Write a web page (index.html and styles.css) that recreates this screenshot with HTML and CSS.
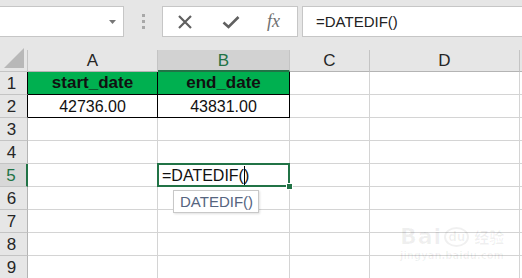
FILE: index.html
```html
<!DOCTYPE html>
<html lang="en">
<head>
    <meta charset="UTF-8">
    <title>DATEDIF</title>
    <link rel="stylesheet" href="styles.css">
</head>
<body>

    <!-- Formula bar -->
    <div class="toolbar">
        <div class="name-box">
            <svg class="drop" width="7" height="4" viewBox="0 0 7 4"><path d="M0 0h7L3.5 4z" fill="#777"/></svg>
        </div>
        <div class="grip"><span></span><span></span><span></span></div>
        <div class="fx-buttons">
            <svg width="16" height="16" viewBox="0 0 16 16"><path d="M2 2L14 14M14 2L2 14" stroke="#606060" stroke-width="2.2" fill="none"/></svg>
            <svg width="18" height="16" viewBox="0 0 18 16"><path d="M1.5 8.5L6.5 13L16.5 3" stroke="#606060" stroke-width="2.6" fill="none"/></svg>
            <span class="fx">fx</span>
        </div>
        <div class="formula">=DATEDIF()</div>
    </div>

    <!-- Sheet -->
    <div class="sheet">
        <div class="corner"><svg width="20" height="20" viewBox="0 0 20 20"><path d="M20 0V20H0z" fill="#b8b8b8"/></svg></div>
        <div class="col-head">A</div>
        <div class="col-head active">B</div>
        <div class="col-head">C</div>
        <div class="col-head">D</div>
        <div class="col-head end"></div>

        <div class="row-head dark">1</div>
        <div class="cell head-cell">start_date</div>
        <div class="cell head-cell">end_date</div>
        <div class="cell"></div>
        <div class="cell"></div>
        <div class="cell end"></div>

        <div class="row-head dark">2</div>
        <div class="cell boxed">42736.00</div>
        <div class="cell boxed">43831.00</div>
        <div class="cell"></div>
        <div class="cell"></div>
        <div class="cell end"></div>

        <div class="row-head">3</div>
        <div class="cell"></div><div class="cell"></div><div class="cell"></div><div class="cell"></div><div class="cell end"></div>

        <div class="row-head">4</div>
        <div class="cell"></div><div class="cell"></div><div class="cell"></div><div class="cell"></div><div class="cell end"></div>

        <div class="row-head active">5</div>
        <div class="cell"></div>
        <div class="cell editing">
            <span class="entry">=DATEDIF(<i class="caret"></i>)</span>
            <div class="selection"><span class="handle"></span></div>
            <div class="hint">DATEDIF()</div>
        </div>
        <div class="cell"></div><div class="cell"></div><div class="cell end"></div>

        <div class="row-head">6</div>
        <div class="cell"></div><div class="cell"></div><div class="cell"></div><div class="cell"></div><div class="cell end"></div>

        <div class="row-head">7</div>
        <div class="cell"></div><div class="cell"></div><div class="cell"></div><div class="cell"></div><div class="cell end"></div>

        <div class="row-head">8</div>
        <div class="cell"></div><div class="cell"></div><div class="cell"></div><div class="cell"></div><div class="cell end"></div>

        <div class="row-head">9</div>
        <div class="cell"></div><div class="cell"></div><div class="cell"></div><div class="cell"></div><div class="cell end"></div>
    </div>

    <!-- Watermark -->
    <div class="watermark">
        <div class="wm-top"><span class="wm-bai">Bai</span><span class="wm-du">du</span><span class="wm-jy">经验</span></div>
        <div class="wm-url">jingyan.baidu.com</div>
    </div>

</body>
</html>
```

FILE: styles.css
```css
/* General */
body {
    margin: 0;
    width: 522px;
    height: 278px;
    overflow: hidden;
    background-color: #e6e6e6;
    font-family: 'Liberation Sans', Arial, sans-serif;
    position: relative;
}

/* Formula bar */
.toolbar {
    display: flex;
    align-items: stretch;
    height: 31px;
    padding: 6px 0 13px 0;
}

.name-box {
    width: 124px;
    background-color: #fff;
    border: 1px solid #c6c6c6;
    border-left: none;
    display: flex;
    align-items: center;
    justify-content: flex-end;
    padding-right: 7px;
    box-sizing: border-box;
}

.grip {
    width: 38px;
    display: flex;
    flex-direction: column;
    align-items: center;
    justify-content: center;
    gap: 3px;
}

.grip span {
    width: 3px;
    height: 3px;
    background-color: #a8a8a8;
}

.fx-buttons {
    width: 136px;
    background-color: #fff;
    border: 1px solid #c6c6c6;
    box-sizing: border-box;
    display: flex;
    align-items: center;
    padding-left: 14px;
    gap: 29px;
}

.fx {
    font-family: 'Liberation Serif', serif;
    font-style: italic;
    font-size: 18px;
    color: #707070;
    margin-left: -2px;
}

.formula {
    flex: 1;
    margin-left: 4px;
    background-color: #fff;
    border: 1px solid #c6c6c6;
    border-right: none;
    font-size: 15px;
    color: #222;
    padding-left: 13px;
    line-height: 29px;
}

/* Sheet grid */
.sheet {
    display: grid;
    grid-template-columns: 28px 130px 132px 80px 150px 2px;
    grid-template-rows: 22px repeat(9, 23px);
    background-color: #fff;
    font-size: 16px;
    color: #111;
}

.sheet > div {
    box-sizing: border-box;
    border-right: 1px solid #d4d4d4;
    border-bottom: 1px solid #d4d4d4;
    display: flex;
    align-items: center;
    justify-content: center;
}

.corner {
    background-color: #e6e6e6;
    align-items: flex-end !important;
    justify-content: flex-end !important;
    padding: 0 3px 3px 0;
    border-color: #c4c4c4 !important;
}

.col-head {
    background-color: #e6e6e6;
    border-right-color: #c4c4c4 !important;
    border-bottom-color: #b4b4b4 !important;
    color: #262626;
    font-size: 17px;
    padding-top: 1px;
}

.col-head.active {
    background-color: #d2d2d2;
    border-bottom: 2px solid #217346 !important;
    color: #217346;
}

.row-head {
    background-color: #e6e6e6;
    border-right-color: #b4b4b4 !important;
    border-bottom-color: #c4c4c4 !important;
    color: #262626;
    font-size: 17px;
    padding-right: 4px;
    padding-top: 1px;
}

.row-head.dark {
    border-right-color: #000 !important;
}

.row-head.active {
    background-color: #d8d8d8;
    border-right: 2px solid #217346 !important;
    color: #217346;
}

.end {
    border-right: none !important;
}

.head-cell {
    background-color: #00b050;
    font-weight: bold;
    font-size: 17px;
    border-right-color: #000 !important;
    border-bottom-color: #000 !important;
}

.boxed {
    border-right-color: #000 !important;
    border-bottom-color: #000 !important;
    padding-top: 1px;
}

/* Cell being edited */
.editing {
    position: relative;
    justify-content: flex-start !important;
    padding-left: 4px;
    padding-top: 1px;
}

.entry {
    white-space: nowrap;
}

.caret {
    display: inline-block;
    width: 1px;
    height: 19px;
    background-color: #000;
    vertical-align: -4px;
    margin-right: -1px;
}

.selection {
    position: absolute;
    top: -1px;
    left: -1px;
    right: -1px;
    bottom: -1px;
    border: 2px solid #217346;
}

.handle {
    position: absolute;
    right: -5px;
    bottom: -5px;
    width: 5px;
    height: 5px;
    background-color: #217346;
    border: 1px solid #fff;
}

.hint {
    position: absolute;
    top: 26px;
    left: 15px;
    width: 86px;
    height: 23px;
    box-sizing: border-box;
    background-color: #fff;
    border: 1px solid #c8c8c8;
    box-shadow: 1px 1px 2px rgba(0, 0, 0, 0.12);
    font-size: 15px;
    color: #55657f;
    padding-left: 6px;
    line-height: 21px;
    z-index: 2;
}

/* Watermark */
.watermark {
    position: absolute;
    left: 400px;
    top: 224px;
    color: rgba(0, 0, 0, 0.06);
    font-family: 'DejaVu Sans', sans-serif;
    font-weight: bold;
    pointer-events: none;
}

.wm-top {
    display: flex;
    align-items: flex-end;
    gap: 2px;
}

.wm-bai {
    font-size: 22px;
    letter-spacing: 1px;
}

.wm-du {
    font-size: 12px;
    border: 2px solid rgba(0, 0, 0, 0.06);
    border-radius: 50%;
    padding: 1px 2px;
    margin-bottom: 2px;
}

.wm-jy {
    font-family: 'Noto Sans CJK SC', sans-serif;
    font-size: 15px;
    margin-left: 3px;
    margin-bottom: 2px;
}

.wm-url {
    font-size: 10px;
    margin-top: 1px;
}
```
